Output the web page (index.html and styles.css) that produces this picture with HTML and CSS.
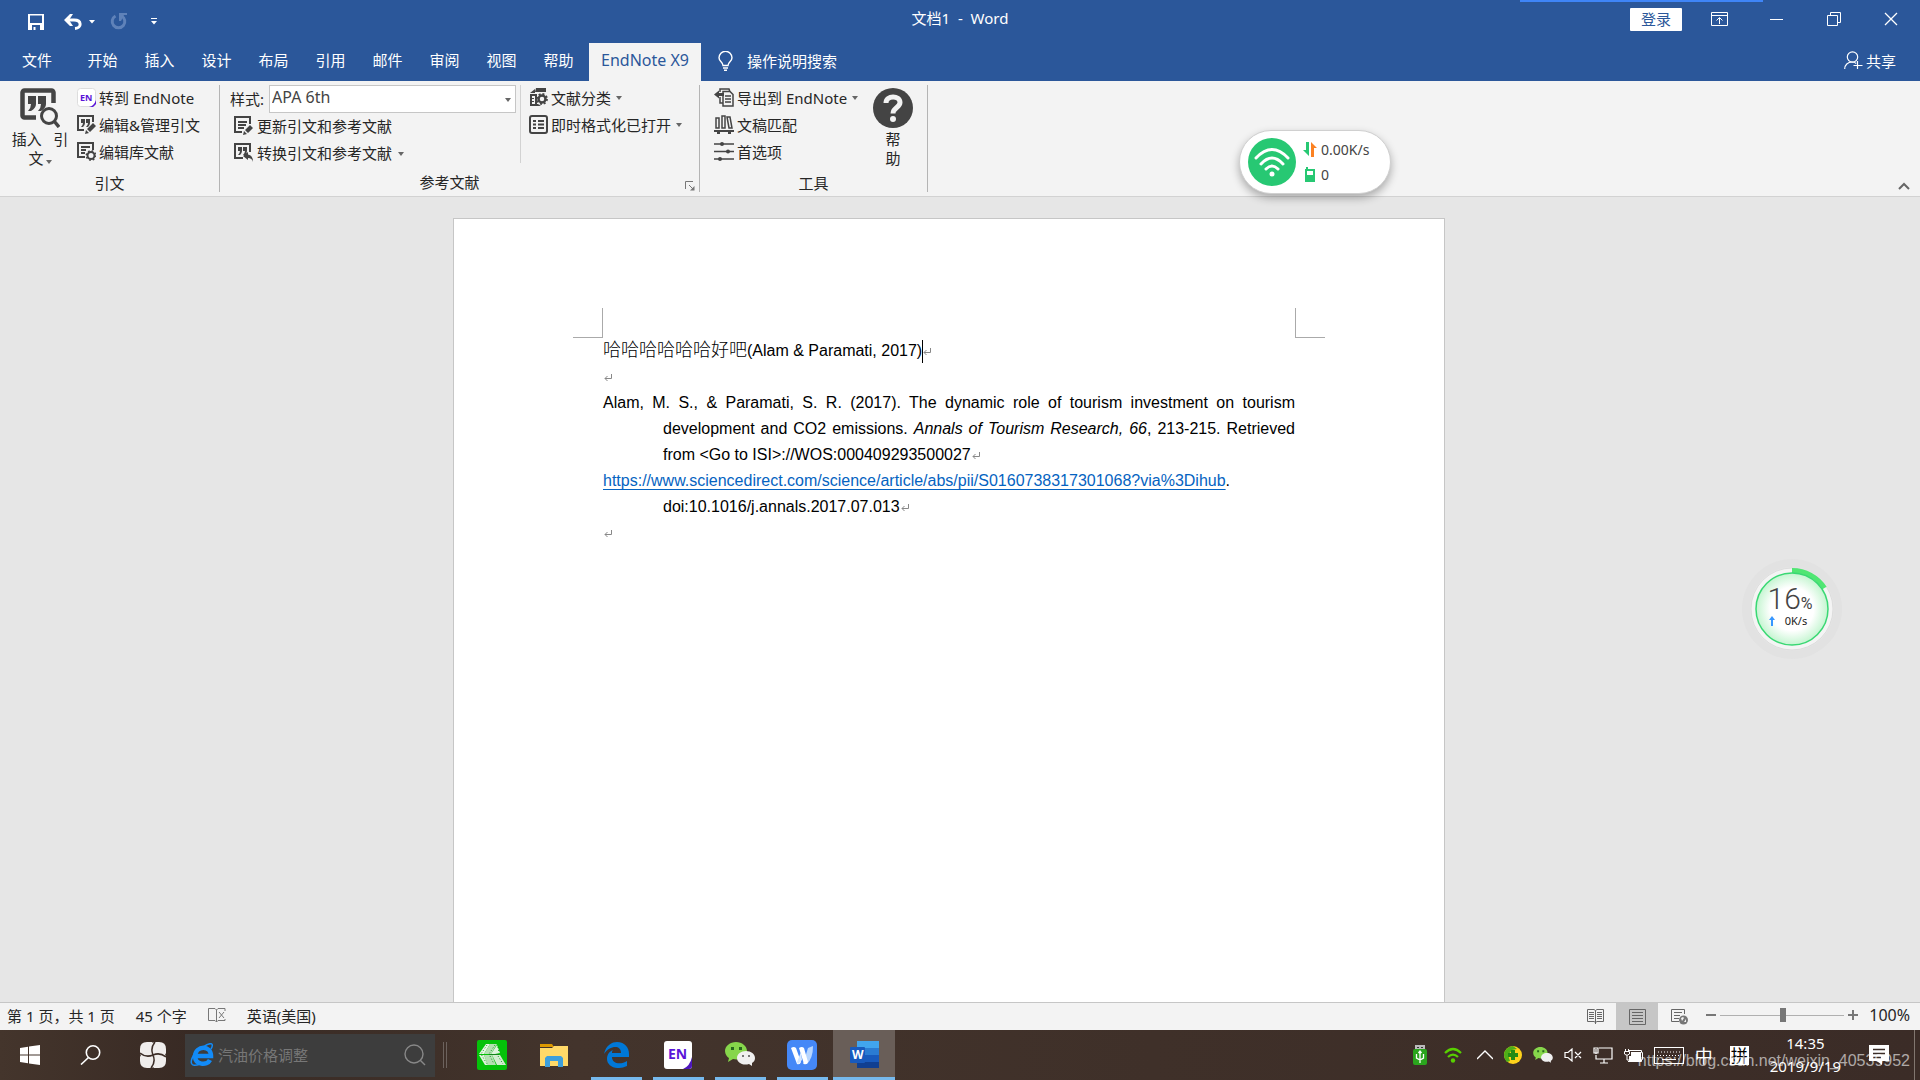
FILE: index.html
```html
<!DOCTYPE html>
<html lang="zh-CN">
<head>
    <meta charset="UTF-8">
    <meta name="viewport" content="width=device-width, initial-scale=1.0">
    <title>文档1 - Word</title>
    <link rel="stylesheet" href="styles.css">
</head>
<body>
    <header class="titlebar">
        <div class="quick-access">
            <button class="icon-btn save" aria-label="保存">
                <svg width="16" height="16" viewBox="0 0 16 16"><path fill="#fff" fill-rule="evenodd" d="M0 0h16v16H0zM2 1.500v7.500h12V1.500zM4 11v5h1.500v-3h2v3H12v-5z"/></svg>
            </button>
            <button class="icon-btn undo" aria-label="撤消">
                <svg width="18" height="16" viewBox="0 0 18 16"><path fill="none" stroke="#fff" stroke-width="3" d="M3 6h7c8 0 8 8 1 8.500"/><path fill="#fff" d="M0 6 6 0h3L5 6l4 6H6z"/></svg>
            </button>
            <button class="icon-btn undo-more" aria-label="更多撤消">
                <svg width="6" height="4" viewBox="0 0 6 4"><path fill="#fff" d="M0 0h6L3 3.500z"/></svg>
            </button>
            <button class="icon-btn redo" aria-label="重复">
                <svg width="17" height="17" viewBox="0 0 17 17"><path fill="none" stroke="#5f82b9" stroke-width="3" d="M5.500 3A6.300 6.300 0 1 0 11.500 3"/><path fill="#5f82b9" d="M9 0h8v2h-3l-3 6H9z"/></svg>
            </button>
            <button class="icon-btn customize" aria-label="自定义快速访问工具栏">
                <svg width="6" height="7" viewBox="0 0 6 7"><path fill="#fff" d="M0 0h6v1H0zM0 3h6L3 6.500z"/></svg>
            </button>
        </div>
        <h1 class="doc-title">文档1&nbsp; -&nbsp; Word</h1>
        <div class="window-controls">
            <button class="sign-in">登录</button>
            <button class="win-btn" aria-label="功能区显示选项">
                <svg width="17" height="14" viewBox="0 0 17 14"><path fill="none" stroke="#fff" d="M.5.5h16v13H.5zM1 3.500h15M8.500 12V6M5.500 8.500l3-3 3 3"/></svg>
            </button>
            <button class="win-btn" aria-label="最小化">
                <svg width="14" height="14" viewBox="0 0 14 14"><path fill="#fff" d="M0 7h13v1H0z"/></svg>
            </button>
            <button class="win-btn" aria-label="还原">
                <svg width="14" height="14" viewBox="0 0 14 14"><path fill="none" stroke="#fff" d="M.5 3.500h10v10H.5zM3.500 3V.5h10v10H11"/></svg>
            </button>
            <button class="win-btn" aria-label="关闭">
                <svg width="14" height="14" viewBox="0 0 14 14"><path fill="none" stroke="#fff" stroke-width="1.300" d="m1 1 12 12M13 1 1 13"/></svg>
            </button>
        </div>
        <div class="top-strip"></div>
    </header>

    <nav class="tabs">
        <button class="tab file">文件</button>
        <button class="tab">开始</button>
        <button class="tab">插入</button>
        <button class="tab">设计</button>
        <button class="tab">布局</button>
        <button class="tab">引用</button>
        <button class="tab">邮件</button>
        <button class="tab">审阅</button>
        <button class="tab">视图</button>
        <button class="tab">帮助</button>
        <button class="tab active">EndNote X9</button>
        <button class="tell-me">
            <svg width="15" height="20" viewBox="0 0 15 20"><path fill="none" stroke="#fff" stroke-width="1.400" d="M5 14.500C5 11 1 10.500 1 6.800a6.500 6.500 0 0 1 13 0C14 10.500 10 11 10 14.500zM5 17h5M6 19.300h3"/></svg>
            操作说明搜索
        </button>
        <button class="share">
            <svg width="19" height="19" viewBox="0 0 19 19"><g fill="none" stroke="#fff" stroke-width="1.200"><circle cx="8.500" cy="6" r="5.200"/><path d="M.7 18c0-4 3-7 7.500-7 2 0 3 .5 4 1.500M13.500 10v8M9.500 14.500h9"/></g></svg>
            共享
        </button>
    </nav>

    <section class="ribbon">
        <div class="group citations">
            <div class="group-body">
                <button class="big-btn">
                    <svg width="40" height="40" viewBox="0 0 40 40"><path fill="none" stroke="#444" stroke-width="4.500" d="M16 29.500H4.500a2 2 0 0 1-2-2v-23a2 2 0 0 1 2-2h27a2 2 0 0 1 2 2V15"/><path fill="#444" d="M8 8h8v8q0 4-5 7H8q3-3 3-7H8zM18 8h8v8q0 4-5 7h-3q3-3 3-7h-3z"/><circle cx="29" cy="28" r="7.500" fill="#f3f3f3" stroke="#444" stroke-width="3"/><path stroke="#444" stroke-width="3.500" d="m34 33 5 6"/></svg>
                    <span>插入&nbsp;&nbsp; 引<br>文<i class="caret"></i></span>
                </button>
                <div class="stack">
                    <button class="small-btn">
                        <svg width="19" height="19" viewBox="0 0 19 19"><rect x=".5" y=".5" width="18" height="18" rx="3" fill="#fff" stroke="#ddd"/><path fill="#5a14d8" d="M19 12v4l-3 3h-4q5-1 7-7z"/><text x="3" y="13" class="en-small">EN</text></svg>
                        转到 EndNote
                    </button>
                    <button class="small-btn">
                        <svg width="19" height="19" viewBox="0 0 19 19"><path fill="none" stroke="#444" stroke-width="2" d="M7 15H1V1h15v6"/><path fill="#444" d="M4 4h4v4q0 2-2 4H4q2-2 2-4H4zM9 4h4v4q0 2-2 4H9q2-2 2-4H9zM8 19l1-4 3 3zM10 14l6-6 3 3-6 6z"/></svg>
                        编辑&amp;管理引文
                    </button>
                    <button class="small-btn">
                        <svg width="19" height="19" viewBox="0 0 19 19"><path fill="none" stroke="#444" stroke-width="2" d="M8 15H1V1h15v7M4 5h9M4 8h5M4 11h4"/><circle cx="14" cy="13.500" r="3.500" fill="#f3f3f3" stroke="#444" stroke-width="2"/><circle cx="14" cy="13.500" r="4.700" fill="none" stroke="#444" stroke-width="1.500" stroke-dasharray="1.700 2"/></svg>
                        编辑库文献
                    </button>
                </div>
            </div>
            <div class="group-name">引文</div>
        </div>

        <div class="group bibliography">
            <div class="group-body">
                <div class="stack styles">
                    <div class="style-row">
                        <label for="style">样式:</label>
                        <div class="select-box">
                            <select id="style"><option>APA 6th</option></select>
                            <i class="caret"></i>
                        </div>
                    </div>
                    <button class="small-btn">
                        <svg width="19" height="19" viewBox="0 0 19 19"><path fill="none" stroke="#444" stroke-width="2" d="M8 16H1V1h15v7M4 6h9M4 9h8M4 12h6"/><path fill="#444" d="m9 19 1-4 3 3zM11 14l5-5 3 3-5 5z"/></svg>
                        更新引文和参考文献
                    </button>
                    <button class="small-btn">
                        <svg width="19" height="19" viewBox="0 0 19 19"><path fill="none" stroke="#444" stroke-width="2" d="M9 15H1V1h15v8"/><path fill="#444" d="M4 4h4v4q0 2-2 4H4q2-2 2-4H4zM9 4h4v4q0 2-2 4H9q2-2 2-4H9zM9 13l5-4v2.500q5 .5 5 7.500-1-4-5-4v2z"/></svg>
                        转换引文和参考文献<i class="caret"></i>
                    </button>
                </div>
                <div class="stack formatting">
                    <button class="small-btn">
                        <svg width="19" height="19" viewBox="0 0 19 19"><path fill="#444" d="M7 0h10v4H6zM1 5l5-4v4zM1 6h5v2H3v2h2v1H3v2h2v1H3v2h6l3 2H1zM6 6h2v10H6z"/><circle cx="13" cy="11" r="3.500" fill="#f3f3f3" stroke="#444" stroke-width="2.500"/><circle cx="13" cy="11" r="5" fill="none" stroke="#444" stroke-width="1.800" stroke-dasharray="2 1.900"/></svg>
                        文献分类<i class="caret"></i>
                    </button>
                    <button class="small-btn">
                        <svg width="19" height="19" viewBox="0 0 19 19"><rect x="1" y="1" width="17" height="17" rx="2" fill="none" stroke="#444" stroke-width="2"/><path stroke="#444" stroke-width="2" d="M4 6h3M9 6h6M4 9.500h3M9 9.500h6M4 13h3M9 13h6"/></svg>
                        即时格式化已打开<i class="caret"></i>
                    </button>
                </div>
            </div>
            <div class="group-name">参考文献</div>
            <button class="launcher" aria-label="参考文献设置">
                <svg width="10" height="10" viewBox="0 0 10 10"><path fill="none" stroke="#777" d="M.5 8V.5H8M4 4l4 4"/><path fill="#777" d="M9.500 5v4.500H5z"/></svg>
            </button>
        </div>

        <div class="group tools">
            <div class="group-body">
                <div class="stack">
                    <button class="small-btn">
                        <svg width="20" height="19" viewBox="0 0 20 19"><path fill="none" stroke="#444" stroke-width="1.500" d="M6 4V1h9l1 3M6 9v6h3M9 18V3.500h7l3 3V18zM11 8h6M11 11h6M11 14h6"/><path fill="#444" d="m0 6.500 5-4V5h5v3H5v2.500z"/></svg>
                        导出到 EndNote<i class="caret"></i>
                    </button>
                    <button class="small-btn">
                        <svg width="20" height="19" viewBox="0 0 20 19"><path fill="none" stroke="#444" stroke-width="1.500" d="M2 3h3v10H2zM8 1h3v12H8zM13 2h3l2 11h-3z"/><path fill="#444" d="M0 15h20v2H0zM3 17h3v2H3zM14 17h3v2h-3z"/></svg>
                        文稿匹配
                    </button>
                    <button class="small-btn">
                        <svg width="20" height="19" viewBox="0 0 20 19"><path stroke="#444" stroke-width="1.500" d="M0 2h20M0 9.500h20M0 17h20"/><circle cx="8" cy="2" r="2" fill="#444"/><circle cx="14" cy="9.500" r="2" fill="#444"/><circle cx="6" cy="17" r="2" fill="#444"/></svg>
                        首选项
                    </button>
                </div>
                <button class="big-btn help">
                    <svg width="40" height="40" viewBox="0 0 40 40"><circle cx="20" cy="20" r="20" fill="#444"/><path fill="none" stroke="#f3f3f3" stroke-width="5" d="M13 15c0-8 14-8 14-.5 0 5-7 5-7 11"/><circle cx="20" cy="31" r="3" fill="#f3f3f3"/></svg>
                    <span>帮<br>助</span>
                </button>
            </div>
            <div class="group-name">工具</div>
        </div>
        <button class="collapse" aria-label="折叠功能区">
            <svg width="12" height="8" viewBox="0 0 12 8"><path fill="none" stroke="#666" stroke-width="2" d="m1 7 5-5 5 5"/></svg>
        </button>
    </section>

    <main class="workspace">
        <article class="page">
            <div class="corners"><span class="corner left"></span><span class="corner right"></span></div>
            <div class="page-text">
                <p><span class="han">哈哈哈哈哈哈好吧</span>(Alam &amp; Paramati, 2017)<span class="cursor"></span><svg class="mark" width="8" height="8" viewBox="0 0 8 8"><path fill="none" stroke="#888" d="M7.500 0v4.500H1M3.500 2 1 4.500 3.500 7"/></svg></p>
                <p><svg class="mark" width="8" height="8" viewBox="0 0 8 8"><path fill="none" stroke="#888" d="M7.500 0v4.500H1M3.500 2 1 4.500 3.500 7"/></svg></p>
                <p class="reference">Alam, M. S., &amp; Paramati, S. R. (2017). The dynamic role of tourism investment on tourism development and CO2 emissions. <em>Annals of Tourism Research, 66</em>, 213-215. Retrieved from&nbsp;&lt;Go to ISI&gt;://WOS:000409293500027<svg class="mark" width="8" height="8" viewBox="0 0 8 8"><path fill="none" stroke="#888" d="M7.500 0v4.500H1M3.500 2 1 4.500 3.500 7"/></svg></p>
                <p class="reference link"><a href="https://www.sciencedirect.com/science/article/abs/pii/S0160738317301068?via%3Dihub">https://www.sciencedirect.com/science/article/abs/pii/S0160738317301068?via%3Dihub</a>.<br>doi:10.1016/j.annals.2017.07.013<svg class="mark" width="8" height="8" viewBox="0 0 8 8"><path fill="none" stroke="#888" d="M7.500 0v4.500H1M3.500 2 1 4.500 3.500 7"/></svg></p>
                <p><svg class="mark" width="8" height="8" viewBox="0 0 8 8"><path fill="none" stroke="#888" d="M7.500 0v4.500H1M3.500 2 1 4.500 3.500 7"/></svg></p>
            </div>
        </article>
    </main>

    <footer class="statusbar">
        <span>第 1 页，共 1 页</span>
        <span>45 个字</span>
        <svg width="18" height="15" viewBox="0 0 18 15"><path fill="none" stroke="#777" d="M8.500 14V2L7 .5H.5v12H7zM8.500 2 10 .5h7V3M8.500 14l1.500-1.500h7V11M11 4l5 6M16 4l-5 6"/></svg>
        <span>英语(美国)</span>
        <div class="views">
            <button class="view" aria-label="阅读视图">
                <svg width="17" height="15" viewBox="0 0 17 15"><path fill="none" stroke="#666" d="M8.500 15V1.500L7 .5H.5v12H7l1.500 1 1.500-1h6.500V.5H10l-1.500 1M2 3.500h5M2 5.500h5M2 7.500h5M2 9.500h5M10 3.500h5M10 5.500h5M10 7.500h5M10 9.500h5"/></svg>
            </button>
            <button class="view selected" aria-label="页面视图">
                <svg width="17" height="16" viewBox="0 0 17 16"><path fill="none" stroke="#666" d="M.5.5h16v15H.5zM3 3.500h11M3 6.500h11M3 9.500h11M3 12.500h11"/></svg>
            </button>
            <button class="view" aria-label="Web 版式视图">
                <svg width="17" height="16" viewBox="0 0 17 16"><path fill="none" stroke="#666" d="M8 12.500H.5V.5h13V5M3 3.500h8M3 6.500h6M3 9.500h5"/><circle cx="12.500" cy="11" r="4.500" fill="#777"/><path fill="#f3f3f3" d="m10 9 2-1 1 1-2 3zM13 13l2-3v3z"/></svg>
            </button>
        </div>
        <button class="zoom-btn" aria-label="缩小">
            <svg width="10" height="10" viewBox="0 0 10 10"><path fill="#777" d="M0 4h10v2H0z"/></svg>
        </button>
        <input type="range" class="zoom" min="0" max="200" value="101" aria-label="显示比例">
        <button class="zoom-btn" aria-label="放大">
            <svg width="10" height="10" viewBox="0 0 10 10"><path fill="#777" d="M0 4h10v2H0zM4 0h2v10H4z"/></svg>
        </button>
        <span class="percent">100%</span>
    </footer>

    <div class="taskbar">
        <button class="task start" aria-label="开始菜单">
            <svg width="20" height="20" viewBox="0 0 20 20"><path fill="#fff" d="M0 3 8 1.800v7.700H0zM9 1.600 20 0v9.500H9zM0 10.500h8v7.700L0 17zM9 10.500h11V20L9 18.400z"/></svg>
        </button>
        <button class="task" aria-label="搜索">
            <svg width="21" height="20" viewBox="0 0 21 20"><g fill="none" stroke="#fff" stroke-width="1.600"><circle cx="13" cy="7.500" r="6.700"/><path d="M8.500 12.500 1 19.500"/></g></svg>
        </button>
        <button class="task widgets" aria-label="小工具">
            <svg width="26" height="26" viewBox="0 0 26 26"><path fill="#efedec" d="M7 0h5l1 1 1-1h5q7 0 7 7v4l-1 2 1 1v5q0 7-7 7h-5l-1-1-1 1H7q-7 0-7-7v-4l1-2-1-1V7q0-7 7-7z"/><path fill="none" stroke="#3b2d27" stroke-width="1.500" d="M13 13Q10 6 15 0M13 13q7-3 13 2M13 13q3 7-2 13M13 13q-7 3-13-2"/></svg>
        </button>
        <div class="search-box">
            <svg width="24" height="24" viewBox="0 0 24 24"><path fill="none" stroke="#128bf8" stroke-width="4.500" d="M5 13h16c0-11-15-11-16 0 0 9 12 10 15 4"/><path fill="none" stroke="#128bf8" stroke-width="1.500" d="M13 4c9-6 11-3 8 2M5 10c-6 9-5 15 5 11"/></svg>
            <input type="text" placeholder="汽油价格调整" aria-label="搜索网页">
            <svg width="22" height="22" viewBox="0 0 22 22"><g fill="none" stroke="#888" stroke-width="1.400"><circle cx="10" cy="10" r="9"/><path d="m16 16 5 5"/></g></svg>
        </div>
        <span class="handle"></span>
        <div class="apps">
            <button class="app" aria-label="视频编辑">
                <svg width="30" height="30" viewBox="0 0 30 30"><rect width="30" height="30" rx="2" fill="#04c209"/><path fill="#e6f6e4" d="M9 4h4L7 14H2z"/><path fill="#b4e0b2" d="M13 4h7l-6 10H7zM7 15h8l4 10h-8z"/><path fill="#dff3dd" d="M2 15h5l4 10H8zM20 5l3 8-5 1h-4z"/><path fill="#d2edcf" d="M15 15h8l6 10h-9z"/><path fill="none" stroke="#1c9423" stroke-dasharray="1 2" d="M10 5 4 14l6 10M18 5l-6 9M13 16l4 8M21 16l5 8M21 7l1 6"/><path fill="#15851b" d="M12 14h10v1H12z"/></svg>
            </button>
            <button class="app" aria-label="文件资源管理器">
                <svg width="28" height="24" viewBox="0 0 28 24"><path fill="#dc9800" d="M0 1h12l2 3H0z"/><path fill="#ffd968" d="M0 5h12l2-2h14v20H0z"/><path fill="#3d9fdc" d="M5 24V15l2-2h14l2 2v9h-5v-6h-8v6z"/></svg>
            </button>
            <button class="app open" aria-label="Microsoft Edge">
                <svg width="25" height="26" viewBox="0 0 25 26"><path fill="#0078d7" d="M0 12C2 3 8 0 13 0c8 0 12 6 12 12v3H8c0 7 9 8 15 4v5C12 29 3 24 3 17c0-5 3-8 6-9-1 1-1 2-1 3h9C17 2 5 4 0 12z"/></svg>
            </button>
            <button class="app open" aria-label="EndNote">
                <svg width="28" height="28" viewBox="0 0 28 28"><rect width="28" height="28" rx="3" fill="#fff"/><path fill="#4d17bb" d="M28 16v9q0 3-3 3h-6q7-3 9-12z"/><text x="4" y="18" class="en-large">EN</text></svg>
            </button>
            <button class="app open" aria-label="微信">
                <svg width="30" height="26" viewBox="0 0 30 26"><path fill="#86d64b" d="M11 0C5 0 0 4 0 9c0 3 2 6 4 7l-1 4 5-3c8 2 14-3 14-8S17 0 11 0z"/><path fill="#f0f0f0" d="M21 9c-5 0-9 3-9 7s5 8 12 6l3 2v-3c2-1 3-3 3-5 0-4-4-7-9-7z"/><path fill="#27681e" d="M6 5h3v3H6zM14 5h3v3h-3z"/><path fill="#777" d="M17 13h2v2h-2zM23 13h2v2h-2z"/></svg>
            </button>
            <button class="app open" aria-label="WPS">
                <svg width="30" height="30" viewBox="0 0 30 30"><rect width="30" height="30" rx="5" fill="#4588f7"/><path fill="#b7d6ff" d="M21 8l5-2q0 12-6 18h-4z"/><path fill="#fff" d="M4 8q3-2 5 0l5 14q-1 3-4 2zM12 8q3-2 5 0l4 14q-1 3-4 2z"/><path fill="#d5e7ff" d="m14 12 1 8-4 4-1-2z"/></svg>
            </button>
            <button class="app open current" aria-label="Word">
                <svg width="29" height="28" viewBox="0 0 29 28"><path fill="#41a5ee" d="M7 0h22v7H7z"/><path fill="#2b7cd3" d="M7 7h22v7H7z"/><path fill="#185abd" d="M7 14h22v7H7z"/><path fill="#103f91" d="M7 21h22v6H7z"/><rect y="6" width="15" height="16" rx="1" fill="#185abd"/><text x="2" y="18" class="w-letter">W</text></svg>
            </button>
        </div>
        <div class="tray">
            <svg class="usb" width="14" height="20" viewBox="0 0 14 20"><path fill="#bbb" d="M2 0h10v5H2z"/><path fill="#333" d="M4 2h2v1H4zM8 2h2v1H8z"/><rect y="4" width="14" height="16" rx="2" fill="#2aa51d"/><path fill="none" stroke="#fff" stroke-width="1.300" d="M7 18V7M3.500 9v4L7 15l3.500-2V9M5.500 8 7 6l1.500 2"/></svg>
            <svg class="wifi" width="18" height="16" viewBox="0 0 18 16"><g fill="none" stroke="#58d000" stroke-width="2.200"><path d="M1 6q8-8 16 0M4 10q5-5 10 0"/></g><circle cx="9" cy="13.500" r="2.200" fill="#58d000"/></svg>
            <svg width="16" height="10" viewBox="0 0 16 10"><path fill="none" stroke="#fff" stroke-width="1.300" d="m0 9 8-8 8 8"/></svg>
            <svg width="18" height="18" viewBox="0 0 18 18"><circle cx="9" cy="9" r="9" fill="#ffd21b"/><path fill="#4eae18" d="M0 9a9 9 0 0 1 9-9l4 3-5 1-4 5 2 6-3 1q-3-3-3-7z"/><path fill="#258b14" d="M7 4h4v3h3v4h-3v3H7v-3H4V7h3z"/></svg>
            <svg width="20" height="17" viewBox="0 0 30 26"><path fill="#86d64b" d="M11 0C5 0 0 4 0 9c0 3 2 6 4 7l-1 4 5-3c8 2 14-3 14-8S17 0 11 0z"/><path fill="#f0f0f0" d="M21 9c-5 0-9 3-9 7s5 8 12 6l3 2v-3c2-1 3-3 3-5 0-4-4-7-9-7z"/><path fill="#27681e" d="M6 5h3v3H6zM14 5h3v3h-3z"/></svg>
            <svg width="18" height="14" viewBox="0 0 18 14"><path fill="none" stroke="#fff" stroke-width="1.200" d="M1 4.500h3L8 1v12L4 9.500H1zM11 4l6 6M17 4l-6 6"/></svg>
            <svg width="20" height="17" viewBox="0 0 20 17"><path fill="none" stroke="#fff" stroke-width="1.200" d="M6 1h13v11H3V8M11 12v4M7 16h8M1 1h4v5H1zM3 2v5"/></svg>
            <svg width="19" height="14" viewBox="0 0 19 14"><path fill="#fff" d="M7 4h10v9H5V8h2z"/><path fill="none" stroke="#fff" d="M1.500 1v2M4.500 1v2M.5 3.500h5V6l-2 1H2L.5 6zM3 7v5h2M4.500 2.500h13v2h1v7h-1v2H4"/></svg>
            <svg width="30" height="17" viewBox="0 0 30 17"><rect x=".5" y=".5" width="29" height="16" fill="none" stroke="#fff"/><path stroke="#fff" stroke-dasharray="1 2" d="M4 5h23M3 8.500h24M4 12h2M24 12h3"/><path stroke="#fff" d="M8 12.500h14"/></svg>
            <button class="ime">中</button>
            <button class="pinyin">拼</button>
            <div class="clock"><time>14:35</time><time>2019/9/19</time></div>
            <svg class="notice" width="20" height="20" viewBox="0 0 20 20"><path fill="#fff" d="M0 0h20v16h-7v4l-5-4H0z"/><path stroke="#3b2d28" stroke-width="1.300" d="M4 4.500h12M4 8.500h12M4 12.500h8"/></svg>
        </div>
        <span class="watermark">https://blog.csdn.net/weixin_40539952</span>
    </div>

    <aside class="wifi-widget">
        <svg width="48" height="48" viewBox="0 0 48 48"><circle cx="24" cy="24" r="24" fill="#27c873"/><g fill="none" stroke="#fff" stroke-width="3" stroke-linecap="round"><path d="M8 20q16-17 32 0M13 26q11-12 22 0M18 31q6-6 12 0"/></g><circle cx="24" cy="36" r="2.500" fill="#fff"/></svg>
        <div class="wifi-stats">
            <span><svg width="14" height="15" viewBox="0 0 14 15"><path fill="#27c873" d="M3 0h3v14L0 8h3z"/><path fill="#fb8122" d="M8 15V0l6 6h-3v9z"/></svg>0.00K/s</span>
            <span><svg width="14" height="15" viewBox="0 0 14 15"><path fill="#27c873" d="M3 0h2v2h7v13H2V2h1z"/><path fill="#fff" d="M4 4h6v4H4z"/></svg>0</span>
        </div>
    </aside>

    <aside class="memory-widget">
        <svg class="ring" width="84" height="84" viewBox="0 0 84 84"><defs><radialGradient id="glow"><stop offset=".6" stop-color="#fff"/><stop offset="1" stop-color="#c4f5d0"/></radialGradient></defs><circle cx="42" cy="42" r="41" fill="#f4f4f4" stroke="#ddd"/><path fill="none" stroke="#50e673" stroke-width="5" d="M42 3.500A38.500 38.500 0 0 1 74.500 21"/><circle cx="42" cy="42" r="36" fill="url(#glow)" stroke="#39d873" stroke-width="1.500"/></svg>
        <div class="memory-text">
            <div class="usage">16<small>%</small></div>
            <div class="speed"><svg width="6" height="10" viewBox="0 0 6 10"><path fill="#3796ff" d="m3 0 3 4H4v6H2V4H0z"/></svg>0K/s</div>
        </div>
    </aside>
</body>
</html>
```
FILE: styles.css
```css
* {
    box-sizing: border-box;
}
body {
    margin: 0;
    height: 100vh;
    display: flex;
    flex-direction: column;
    overflow: hidden;
    position: relative;
    font-family: "Noto Sans", "Noto Sans CJK SC", sans-serif;
    font-size: 15px;
    color: #262626;
    background-color: #e6e6e6;
}
button {
    padding: 0;
    border: 0;
    background: none;
    font: inherit;
    color: inherit;
}
svg {
    display: block;
    flex: none;
}

/* title bar */
.titlebar {
    display: grid;
    grid-template-columns: 1fr auto 1fr;
    height: 43px;
    flex: none;
    position: relative;
    background-color: #2b579a;
    color: #fff;
}
.quick-access {
    display: flex;
    align-items: center;
    padding-left: 28px;
}
.undo {
    margin-left: 20px;
}
.undo-more {
    margin-left: 7px;
}
.redo {
    margin-left: 15px;
}
.customize {
    margin-left: 24px;
}
.doc-title {
    margin: 0;
    font-size: 15px;
    font-weight: normal;
    line-height: 36px;
}
.window-controls {
    display: flex;
    justify-content: flex-end;
    align-items: center;
    height: 38px;
    padding-right: 1px;
}
.sign-in {
    width: 52px;
    height: 23px;
    margin-right: 9px;
    border-radius: 1px;
    background-color: #fff;
    color: #2b579a;
    line-height: 21px;
}
.win-btn {
    display: flex;
    align-items: center;
    justify-content: center;
    width: 57px;
    height: 38px;
}
.top-strip {
    position: absolute;
    top: 0;
    right: 157px;
    width: 243px;
    height: 2px;
    background-color: #3f85f8;
}

/* tabs */
.tabs {
    display: flex;
    height: 38px;
    flex: none;
    background-color: #2b579a;
    color: #fff;
}
.tab {
    width: 57px;
    height: 38px;
    padding-bottom: 5px;
}
.tab.file {
    width: 74px;
}
.tab.active {
    width: 112px;
    margin-left: 2px;
    background-color: #f3f3f3;
    color: #2b579a;
    font-size: 16px;
}
.tell-me, .share {
    display: flex;
    align-items: center;
    gap: 14px;
    margin-left: 17px;
    padding-bottom: 3px;
}
.share {
    gap: 3px;
    margin-left: auto;
    margin-right: 24px;
}

/* ribbon */
.ribbon {
    display: flex;
    height: 116px;
    flex: none;
    padding: 4px 0;
    position: relative;
    background-color: #f3f3f3;
    border-bottom: 1px solid #d2d2d2;
}
.group {
    display: flex;
    flex-direction: column;
    position: relative;
    border-right: 1px solid #b4b4b4;
}
.citations {
    width: 220px;
}
.citations .group-body {
    padding-left: 8px;
}
.bibliography {
    width: 480px;
}
.bibliography .group-body {
    padding-left: 10px;
}
.tools {
    width: 228px;
}
.tools .group-body {
    padding-left: 14px;
}
.group-body {
    display: flex;
    height: 85px;
}
.group-name {
    padding-top: 3px;
    line-height: 24px;
    text-align: center;
}
.bibliography .group-name {
    padding-right: 20px;
}
.big-btn {
    display: flex;
    flex-direction: column;
    align-items: center;
    width: 64px;
    padding-top: 3px;
    margin-right: 5px;
    line-height: 19px;
}
.big-btn span {
    margin-top: 2px;
}
.big-btn.help {
    width: 40px;
    margin-left: 15px;
}
.stack {
    display: flex;
    flex-direction: column;
}
.small-btn {
    display: flex;
    align-items: center;
    gap: 3px;
    height: 27px;
    padding-bottom: 3px;
    white-space: nowrap;
}
.caret {
    display: inline-block;
    flex: none;
    margin-left: 2px;
    border: 3px solid transparent;
    border-top: 4px solid #666;
    border-bottom: 0;
}
.small-btn .caret {
    margin-top: 2px;
}
.styles {
    width: 290px;
}
.styles .small-btn {
    padding-left: 4px;
    padding-bottom: 2px;
    gap: 4px;
}
.style-row {
    display: flex;
    align-items: center;
    gap: 5px;
}
.style-row label {
    padding-bottom: 2px;
}
.select-box {
    position: relative;
    flex: 1;
    margin-right: 4px;
}
.select-box select {
    display: block;
    width: 100%;
    height: 28px;
    padding: 0 2px 4px;
    appearance: none;
    border: 1px solid #c6c6c6;
    border-radius: 0;
    background-color: #fff;
    font: inherit;
    font-size: 16px;
    color: #444;
}
.select-box .caret {
    position: absolute;
    right: 5px;
    top: 13px;
}
.formatting {
    height: 78px;
    padding-left: 8px;
    border-left: 1px solid #d2d2d2;
}
.launcher {
    position: absolute;
    right: 4px;
    bottom: 1px;
}
.collapse {
    position: absolute;
    right: 10px;
    bottom: 6px;
}

/* document */
.workspace {
    flex: 1;
    min-height: 0;
    display: flex;
    justify-content: center;
    padding: 21px 22px 0 0;
}
.page {
    width: 992px;
    padding: 89px 119px 0;
    background-color: #fff;
    border: 1px solid #c6c6c6;
    border-bottom: 0;
}
.corners {
    display: flex;
    justify-content: space-between;
}
.corner {
    width: 30px;
    height: 30px;
    border-bottom: 1px solid #aaa;
}
.corner.left {
    border-right: 1px solid #aaa;
}
.corner.right {
    border-left: 1px solid #aaa;
}
.page-text {
    padding: 0 30px;
    font-family: "Liberation Sans", "Noto Sans CJK SC", sans-serif;
    font-weight: 300;
    font-size: 16px;
    line-height: 26px;
    color: #000;
}
.page-text p {
    margin: 0;
    height: 26px;
}
.han {
    font-size: 18px;
    line-height: 20px;
}
.page-text .reference {
    height: auto;
    padding-left: 60px;
    text-indent: -60px;
    text-align: justify;
}
.page-text .link {
    text-align: left;
}
.page-text a {
    color: #0563c1;
    text-underline-offset: 3px;
}
.mark {
    display: inline-block;
    margin-left: 1px;
}
.cursor {
    display: inline-block;
    width: 1px;
    height: 23px;
    margin-right: -1px;
    vertical-align: middle;
    background-color: #000;
}

/* status bar */
.statusbar {
    display: flex;
    align-items: center;
    gap: 21px;
    height: 28px;
    flex: none;
    padding: 0 10px 3px 7px;
    background-color: #f3f3f3;
    border-top: 1px solid #c6c6c6;
}
.views {
    display: flex;
    margin-left: auto;
}
.view {
    display: flex;
    align-items: center;
    justify-content: center;
    width: 42px;
    height: 27px;
    margin-bottom: -3px;
}
.view.selected {
    background-color: #c6c6c6;
}
.zoom-btn {
    margin-left: -17px;
}
.views + .zoom-btn {
    margin-left: -15px;
}
.zoom {
    width: 124px;
    height: 16px;
    margin: 0 0 0 -17px;
    appearance: none;
    background: linear-gradient(#b0b0b0, #b0b0b0) center / 100% 1px no-repeat;
}
.zoom::-webkit-slider-thumb {
    appearance: none;
    width: 6px;
    height: 14px;
    background-color: #777;
}
.percent {
    margin-left: -10px;
    font-size: 16px;
}

/* taskbar */
.taskbar {
    display: flex;
    align-items: center;
    height: 50px;
    flex: none;
    position: relative;
    background: linear-gradient(90deg, #44352c, #382a24 10%, #43342c 30%, #3f3029 60%, #3b2c27);
    color: #fff;
}
.task {
    display: flex;
    align-items: center;
    justify-content: center;
    width: 60px;
    height: 50px;
}
.task.widgets {
    width: 65px;
}
.search-box {
    display: flex;
    align-items: center;
    width: 250px;
    height: 43px;
    padding: 0 9px 0 5px;
    background-color: #3d3d3d;
}
.search-box input {
    flex: 1;
    min-width: 0;
    padding: 0 4px;
    border: 0;
    background: none;
    font: inherit;
    color: #fff;
}
.search-box input::placeholder {
    color: #777;
}
.handle {
    width: 4px;
    height: 26px;
    margin: 0 14px 0 8px;
    border: 1px solid #6c625d;
    border-width: 0 1px;
}
.apps {
    display: flex;
}
.app {
    display: flex;
    align-items: center;
    justify-content: center;
    width: 62px;
    height: 50px;
}
.app.open {
    background: linear-gradient(#76b9ed, #76b9ed) bottom / 51px 3px no-repeat;
}
.app.current {
    background-color: #695e58;
    background-size: 100% 3px;
}
.tray {
    display: flex;
    align-items: center;
    gap: 11px;
    height: 50px;
    margin-left: auto;
    margin-right: 5px;
    padding-right: 25px;
    border-right: 1px solid #81766f;
}
.usb {
    margin-right: 6px;
}
.wifi {
    margin-right: 4px;
}
.ime {
    font-size: 18px;
}
.pinyin {
    width: 19px;
    height: 19px;
    margin: 0 10px 0 6px;
    background-color: #fff;
    color: #000;
    font-size: 17px;
    line-height: 19px;
}
.clock {
    display: flex;
    flex-direction: column;
    align-items: center;
    line-height: 23px;
}
.notice {
    margin-left: 17px;
}
.watermark {
    position: absolute;
    right: 10px;
    top: 21px;
    font: 16px/20px "Liberation Sans", Arial, sans-serif;
    color: rgba(255, 255, 255, 0.6);
}
.en-small, .en-large, .w-letter {
    font-family: "Open Sans", sans-serif;
    font-weight: bold;
    font-size: 9px;
    fill: #5a14d8;
}
.en-large {
    font-size: 14px;
}
.w-letter {
    font-size: 12px;
    fill: #fff;
}

/* floating desktop widgets */
.wifi-widget {
    display: flex;
    align-items: center;
    gap: 7px;
    position: absolute;
    top: 130px;
    right: 529px;
    width: 152px;
    height: 64px;
    padding-left: 8px;
    border: 1px solid #d0d0d0;
    border-radius: 32px;
    background-color: #fff;
    box-shadow: 0 4px 8px rgba(0, 0, 0, 0.3);
    font-size: 14px;
    color: #444;
}
.wifi-stats span {
    display: flex;
    align-items: center;
    gap: 4px;
    line-height: 25px;
}
.memory-widget {
    position: absolute;
    top: 567px;
    right: 86px;
    border-radius: 50%;
    box-shadow: 0 0 0 8px #e2e2e2;
}
.memory-text {
    position: absolute;
    inset: 16px 4px 0 0;
    text-align: center;
    color: #444;
}
.usage {
    height: 32px;
    font: 300 30px/32px Roboto, sans-serif;
}
.usage small {
    font-size: 16px;
    font-weight: 400;
}
.speed {
    display: flex;
    align-items: center;
    justify-content: center;
    gap: 10px;
    padding-right: 4px;
    font-size: 11px;
    line-height: 16px;
    height: 16px;
    margin-top: -2px;
    color: #222;
}
```
